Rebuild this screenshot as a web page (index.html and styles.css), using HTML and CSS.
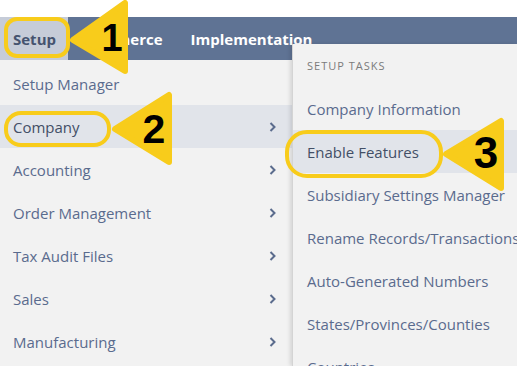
FILE: index.html
```html
<!DOCTYPE html>
<html lang="en">
<head>
<meta charset="UTF-8">
<meta name="viewport" content="width=device-width, initial-scale=1.0">
<title>Setup Menu</title>
<link rel="stylesheet" href="styles.css">
</head>
<body>
    <div class="top-strip"></div>

    <nav class="navbar">
        <span class="tab active">Setup</span>
        <span class="tab">Commerce</span>
        <span class="tab">Implementation</span>
    </nav>

    <ul class="menu">
        <li class="menu-item">Setup Manager</li>
        <li class="menu-item selected">Company <svg class="chev" viewBox="0 0 7 10"><polyline points="1.5,1 5.5,5 1.5,9"/></svg></li>
        <li class="menu-item">Accounting <svg class="chev" viewBox="0 0 7 10"><polyline points="1.5,1 5.5,5 1.5,9"/></svg></li>
        <li class="menu-item">Order Management <svg class="chev" viewBox="0 0 7 10"><polyline points="1.5,1 5.5,5 1.5,9"/></svg></li>
        <li class="menu-item">Tax Audit Files <svg class="chev" viewBox="0 0 7 10"><polyline points="1.5,1 5.5,5 1.5,9"/></svg></li>
        <li class="menu-item">Sales <svg class="chev" viewBox="0 0 7 10"><polyline points="1.5,1 5.5,5 1.5,9"/></svg></li>
        <li class="menu-item">Manufacturing <svg class="chev" viewBox="0 0 7 10"><polyline points="1.5,1 5.5,5 1.5,9"/></svg></li>
    </ul>

    <!-- flyout submenu -->
    <div class="flyout">
        <div class="flyout-title">Setup Tasks</div>
        <ul class="sub-list">
            <li class="sub-item">Company Information</li>
            <li class="sub-item selected">Enable Features</li>
            <li class="sub-item">Subsidiary Settings Manager</li>
            <li class="sub-item">Rename Records/Transactions</li>
            <li class="sub-item">Auto-Generated Numbers</li>
            <li class="sub-item">States/Provinces/Counties</li>
            <li class="sub-item">Countries</li>
        </ul>
    </div>

    <!-- annotation layer -->
    <svg class="marks" viewBox="0 0 517 366">
        <rect class="ring" x="6" y="19" width="62" height="37" rx="11"/>
        <rect class="ring" x="6" y="113" width="103" height="32" rx="15"/>
        <rect class="ring" x="287" y="132" width="154" height="44" rx="20"/>

        <polygon class="pointer" points="73,40 125,3 125,71"/>
        <polygon class="pointer" points="115,129 169,95 169,162"/>
        <polygon class="pointer" points="446,154 501,121 501,188"/>

        <text class="num" x="112" y="51" font-size="38">1</text>
        <text class="num" x="154" y="143" font-size="41">2</text>
        <text class="num" x="486" y="168" font-size="44">3</text>
    </svg>
</body>
</html>
```

FILE: styles.css
```css
body {
    margin: 0;
    padding: 0;
    width: 517px;
    height: 366px;
    overflow: hidden;
    position: relative;
    background-color: #f2f2f2;
    font-family: 'Open Sans', 'Noto Sans', sans-serif;
}

.top-strip {
    height: 17px;
    background-color: #ffffff;
}

.navbar {
    display: flex;
    align-items: stretch;
    height: 43px;
    background-color: #5f7394;
}
.tab {
    display: flex;
    align-items: center;
    padding: 0 14px;
    color: #ffffff;
    font-size: 15px;
    font-weight: 700;
}
.tab.active {
    width: 68px;
    box-sizing: border-box;
    padding: 0 0 0 13px;
    background-color: #c6ccd8;
    color: #45536f;
}

.menu {
    list-style: none;
    margin: 0;
    padding: 2px 0 0 0;
    width: 292px;
}
.menu-item {
    display: flex;
    align-items: center;
    justify-content: space-between;
    height: 43px;
    padding: 0 16px 0 13px;
    color: #5a6b8e;
    font-size: 15px;
}
.menu-item.selected {
    background-color: #e1e4ea;
    color: #434f66;
}
.chev {
    width: 7px;
    height: 10px;
}
.chev polyline {
    fill: none;
    stroke: #5b6c8d;
    stroke-width: 2;
}

.flyout {
    position: absolute;
    left: 292px;
    top: 44px;
    right: 0;
    bottom: 0;
    background-color: #f2f2f2;
    border-left: 1px solid #d4d4d4;
    box-shadow: -2px 0 4px rgba(0, 0, 0, 0.12);
}
.flyout-title {
    height: 43px;
    display: flex;
    align-items: center;
    padding-left: 14px;
    color: #7b7b7b;
    font-size: 11px;
    letter-spacing: 1px;
    text-transform: uppercase;
}
.sub-list {
    list-style: none;
    margin: 0;
    padding: 0;
}
.sub-item {
    display: flex;
    align-items: center;
    height: 43px;
    padding-left: 14px;
    color: #5a6b8e;
    font-size: 15px;
    white-space: nowrap;
}
.sub-item.selected {
    background-color: #e1e4ea;
    color: #434f66;
}

.marks {
    position: absolute;
    left: 0;
    top: 0;
    width: 517px;
    height: 366px;
}
.ring {
    fill: none;
    stroke: #f8cc1b;
    stroke-width: 4;
}
.pointer {
    fill: #f8cc1b;
    stroke: #f8cc1b;
    stroke-width: 6;
    stroke-linejoin: round;
}
.num {
    fill: #000000;
    font-family: 'Liberation Sans', Arial, sans-serif;
    font-weight: 700;
    text-anchor: middle;
}
```
